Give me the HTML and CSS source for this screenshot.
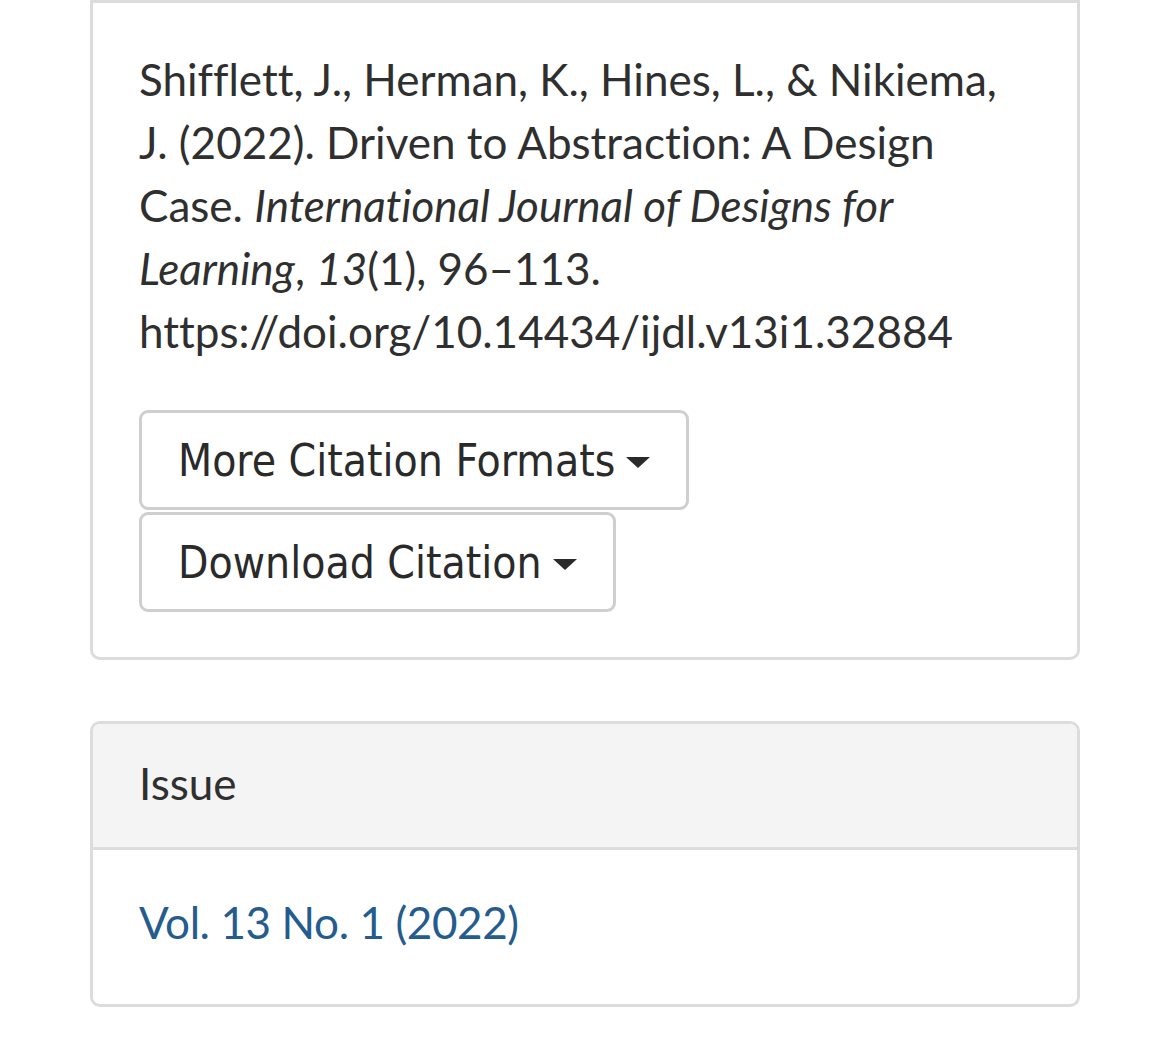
FILE: index.html
```html
<!DOCTYPE html>
<html>
<head>
<meta charset="utf-8">
<link rel="stylesheet" href="styles.css">
</head>
<body>
<div class="page">
  <section class="card citation">
    <p class="cite-text">Shifflett, J., Herman, K., Hines, L., &amp; Nikiema, J. (2022). Driven to Abstraction: A Design Case. <em>International Journal of Designs for Learning</em>, <em>13</em>(1), 96–113. https://doi.org/10.14434/ijdl.v13i1.32884</p>
    <div class="btns">
      <button class="btn">More Citation Formats <span class="caret"></span></button>
      <button class="btn">Download Citation <span class="caret"></span></button>
    </div>
  </section>
  <section class="card issue">
    <div class="card-head">Issue</div>
    <div class="card-body"><a class="issue-link" href="#">Vol. 13 No. 1 (2022)</a></div>
  </section>
</div>
</body>
</html>
```
FILE: styles.css
```css
html, body {
  margin: 0;
  padding: 0;
  background: #fff;
}
body {
  font-family: Lato, "Open Sans", sans-serif;
  font-variant-ligatures: none;
  color: #2f2f2f;
}
.page {
  padding: 0 90px;
  display: flex;
  flex-direction: column;
  gap: 61px;
}
.card {
  border: 3px solid #dcdcdc;
  border-radius: 10px;
}
.citation {
  border-top-left-radius: 0;
  border-top-right-radius: 0;
  padding: 45px 45px 45px 46px;
}
.cite-text {
  margin: 0 0 47px;
  font-size: 44px;
  line-height: 63px;
}
.cite-text em {
  font-style: italic;
}
.btns {
  display: flex;
  flex-direction: column;
  align-items: flex-start;
  gap: 2px;
}
.btn {
  font-family: "Liberation Sans Narrow", "DejaVu Sans Condensed", sans-serif;
  font-size: 44px;
  color: #2a2a2a;
  background: #fff;
  border: 3px solid #cfcfcf;
  border-radius: 9px;
  height: 100px;
  padding: 0 36px 0 36px;
  display: flex;
  align-items: center;
  gap: 11px;
}
.caret {
  width: 0;
  height: 0;
  border-left: 12px solid transparent;
  border-right: 12px solid transparent;
  border-top: 11px solid #2a2a2a;
  margin-top: 4px;
}
.card-head {
  background: #f4f4f4;
  border-bottom: 3px solid #dcdcdc;
  height: 126px;
  box-sizing: border-box;
  display: flex;
  align-items: center;
  padding: 0 46px 6px;
  font-size: 44px;
  border-radius: 7px 7px 0 0;
}
.card-body {
  padding: 0 46px 10px;
  height: 154px;
  box-sizing: border-box;
  display: flex;
  align-items: center;
}
.issue-link {
  color: #245c8e;
  text-decoration: none;
  font-size: 44px;
  letter-spacing: -0.4px;
}
```
